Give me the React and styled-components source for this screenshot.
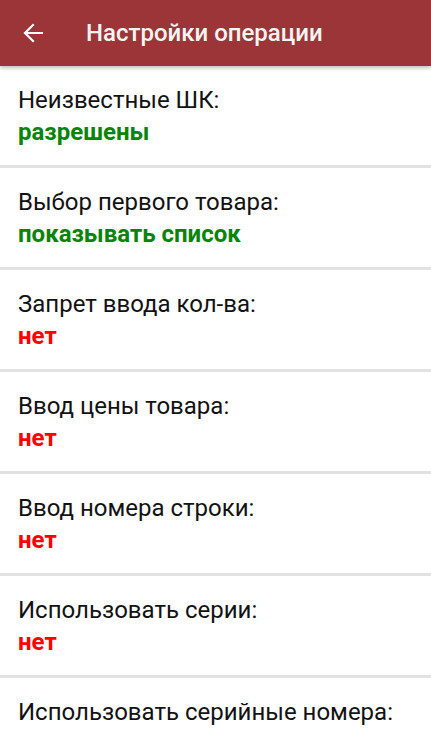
import styled, { createGlobalStyle } from "styled-components";

const GlobalStyle = createGlobalStyle`
  html, body {
    margin: 0;
    padding: 0;
    background: #ffffff;
  }
  body {
    font-family: Roboto, "Noto Sans", sans-serif;
  }
`;

const Screen = styled.div`
  width: 431px;
  height: 739px;
  overflow: hidden;
  background: #ffffff;
`;

const Toolbar = styled.header`
  position: relative;
  z-index: 1;
  display: flex;
  align-items: center;
  height: 66px;
  padding: 0 0 0 22px;
  background: #9c3538;
  box-shadow: 0 2px 4px rgba(0, 0, 0, 0.25);
  box-sizing: border-box;
`;

const BackButton = styled.button`
  display: flex;
  align-items: center;
  justify-content: center;
  width: 22px;
  height: 22px;
  padding: 0;
  margin-right: 42px;
  border: none;
  background: none;
  color: #ffffff;
`;

const Title = styled.h1`
  margin: 0;
  font-size: 24px;
  font-weight: 500;
  color: #f5f5f5;
`;

const List = styled.ul`
  list-style: none;
  margin: 0;
  padding: 0;
`;

const Row = styled.li`
  padding: 18px 18px 17px;
  border-bottom: 3px solid #e2e2e2;
`;

const Label = styled.div`
  font-size: 24px;
  line-height: 32px;
  color: #121212;
`;

const Value = styled.div`
  font-size: 24px;
  line-height: 32px;
  font-weight: 700;
  color: ${({ $on }) => ($on ? "#088408" : "#ff0000")};
`;

const settings = [
  { label: "Неизвестные ШК:", value: "разрешены", on: true },
  { label: "Выбор первого товара:", value: "показывать список", on: true },
  { label: "Запрет ввода кол-ва:", value: "нет", on: false },
  { label: "Ввод цены товара:", value: "нет", on: false },
  { label: "Ввод номера строки:", value: "нет", on: false },
  { label: "Использовать серии:", value: "нет", on: false },
  { label: "Использовать серийные номера:", value: "нет", on: false },
];

function ArrowBack() {
  return (
    <svg width="20" height="20" viewBox="0 0 20 20" fill="none">
      <path
        d="M19 10H2M10 2L2 10l8 8"
        stroke="currentColor"
        strokeWidth="2.2"
        strokeLinecap="square"
      />
    </svg>
  );
}

export default function App() {
  return (
    <Screen>
      <GlobalStyle />
      <Toolbar>
        <BackButton aria-label="Назад">
          <ArrowBack />
        </BackButton>
        <Title>Настройки операции</Title>
      </Toolbar>
      <List>
        {settings.map((s) => (
          <Row key={s.label}>
            <Label>{s.label}</Label>
            <Value $on={s.on}>{s.value}</Value>
          </Row>
        ))}
      </List>
    </Screen>
  );
}
